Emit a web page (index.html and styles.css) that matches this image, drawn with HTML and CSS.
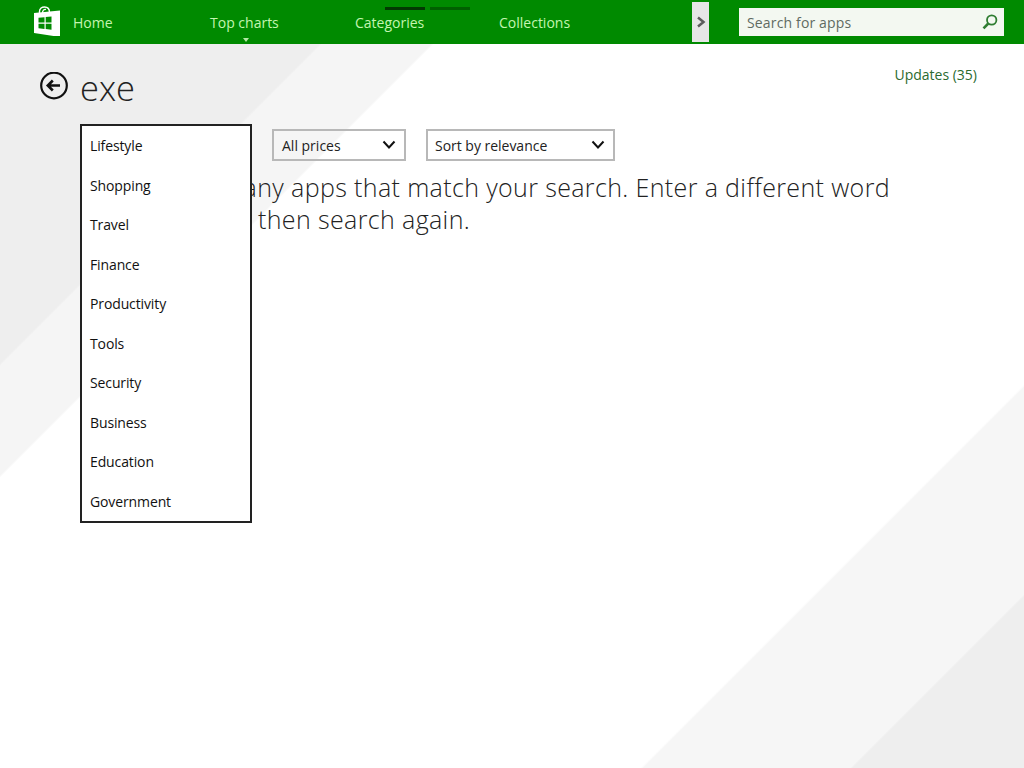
FILE: index.html
```html
<!DOCTYPE html>
<html lang="en">
<head>
<meta charset="utf-8">
<title>Store search</title>
<link rel="stylesheet" href="styles.css">
</head>
<body>
<header class="topbar">
  <svg class="logo" width="28" height="30" viewBox="0 0 28 30">
    <path class="logo-handle" d="M6.500 8 V5.500 C6.500 2.500 9 1 11.500 1 C14.500 1 16.500 3 16.500 6.500 M9.500 7 C9.500 4.500 11 3 13 3.500"/>
    <path class="logo-bag" d="M1 7 L27 4.500 V31 L1 27 Z"/>
    <path class="logo-win" d="M5.500 11.800 L11.500 11.200 V16.600 H5.500 Z M12.700 11.100 L18.500 10.500 V16.600 H12.700 Z M5.500 17.800 H11.500 V22.900 L5.500 22.300 Z M12.700 17.800 H18.500 V23.800 L12.700 23.100 Z"/>
  </svg>
  <nav class="nav">
    <a class="nav-item nav-home">Home</a>
    <a class="nav-item nav-charts">Top charts<span class="caret"></span></a>
    <a class="nav-item nav-cats">Categories</a>
    <a class="nav-item nav-coll">Collections</a>
  </nav>
  <div class="pager"><span class="pip pip-on"></span><span class="pip"></span></div>
  <button class="scroll-btn">
    <svg width="10" height="12" viewBox="0 0 10 12"><path d="M2 1.500 L7.500 6 L2 10.500" /></svg>
  </button>
  <div class="search">
    <span class="search-text">Search for apps</span>
    <svg class="search-icon" width="18" height="18" viewBox="0 0 18 18"><circle cx="10.700" cy="7" r="4.700"/><path class="search-handle" d="M7.300 10.500 L2.500 15.300"/></svg>
  </div>
</header>
<main class="page">
  <div class="title-row">
    <svg class="back" width="30" height="30" viewBox="0 0 30 30"><circle cx="15" cy="13.500" r="12.800"/><path class="back-arrow" d="M9 13.500 H21 M13.800 8.500 L8.800 13.500 L13.800 18.500"/></svg>
    <h1 class="title">exe</h1>
    <a class="updates">Updates (35)</a>
  </div>
  <div class="content">
    <ul class="dropdown">
      <li>Lifestyle</li>
      <li>Shopping</li>
      <li>Travel</li>
      <li>Finance</li>
      <li>Productivity</li>
      <li>Tools</li>
      <li>Security</li>
      <li>Business</li>
      <li>Education</li>
      <li>Government</li>
    </ul>
    <div class="results">
      <div class="filters">
        <div class="select select-price"><span>All prices</span><svg width="14" height="10" viewBox="0 0 14 10"><path d="M1.500 1.500 L7 7.500 L12.500 1.500"/></svg></div>
        <div class="select select-sort"><span>Sort by relevance</span><svg width="14" height="10" viewBox="0 0 14 10"><path d="M1.500 1.500 L7 7.500 L12.500 1.500"/></svg></div>
      </div>
      <p class="message"><span class="line line-one">any apps that match your search. Enter a different word</span><span class="line line-two">then search again.</span></p>
    </div>
  </div>
</main>
</body>
</html>
```
FILE: styles.css
```css
* { box-sizing: border-box; }
html, body { margin: 0; height: 100%; }
body {
  width: 1024px;
  height: 768px;
  overflow: hidden;
  font-family: "Open Sans", "Noto Sans", sans-serif;
  color: #1a1a1a;
  background: linear-gradient(135deg,
    #eeeeee 0, #eeeeee 257px,
    #f5f5f5 259px, #f5f5f5 336px,
    #ffffff 338px, #ffffff 996px,
    #f6f6f6 998px, #f6f6f6 1144px,
    #eeeeee 1146px);
}
.topbar {
  position: relative;
  display: flex;
  align-items: center;
  height: 44px;
  background: #008a00;
  padding-left: 33px;
}
.logo { flex: none; margin-top: -2px; }
.logo-handle { fill: none; stroke: #fff; stroke-width: 1.4; }
.logo-bag { fill: #fff; }
.logo-win { fill: #008a00; }
.nav { display: flex; font-size: 14px; margin-left: 12px; }
.nav-item { color: #c4f5b0; display: block; position: relative; white-space: nowrap; }
.nav-home { width: 137px; }
.nav-charts { width: 145px; }
.nav-cats { width: 144px; }
.nav-coll { width: 100px; }
.caret {
  position: absolute;
  left: 32px;
  top: 25px;
  margin-left: 1px;
  border: 3.500px solid transparent;
  border-top: 4px solid #b5e8a5;
  border-bottom: 0;
}
.pager {
  position: absolute;
  left: 385px;
  top: 7px;
  display: flex;
  gap: 5px;
}
.pip { width: 40px; height: 3px; background: #006000; }
.pip-on { background: #023a02; }
.scroll-btn {
  position: absolute;
  left: 692px;
  top: 2px;
  width: 17px;
  height: 40px;
  padding: 0;
  border: 0;
  background: #e6e6e6;
  display: flex;
  align-items: center;
  justify-content: center;
}
.scroll-btn svg { fill: none; stroke: #5c5c5c; stroke-width: 2.500; }
.search {
  position: absolute;
  left: 739px;
  top: 8px;
  width: 265px;
  height: 28px;
  background: #f3f8f1;
  display: flex;
  align-items: center;
  justify-content: space-between;
  padding: 0 5px 0 8px;
  font-size: 14px;
  letter-spacing: .15px;
  color: #5f6b62;
}
.search-icon { fill: none; stroke: #2f7d32; stroke-width: 1.800; }
.search-handle { stroke-width: 2.600; }
.page { position: relative; }
.title-row {
  display: flex;
  align-items: flex-start;
  padding: 28px 47px 0 39px;
  height: 80px;
}
.back { fill: none; stroke: #111; stroke-width: 2.200; flex: none; }
.back-arrow { stroke-width: 2.600; }
.title {
  margin: -6px 0 0 11px;
  font-size: 34.500px;
  line-height: 44px;
  font-weight: 300;
  color: #222;
}
.updates { margin-left: auto; margin-top: -7px; font-size: 14px; color: #2b6b2f; }
.content { display: flex; align-items: flex-start; padding-left: 80px; }
.dropdown {
  position: relative;
  z-index: 1;
  flex: none;
  list-style: none;
  margin: 0;
  padding: 1px 0 0 8px;
  width: 172px;
  height: 399px;
  background: #fff;
  border: 2px solid #222;
  font-size: 14px;
  letter-spacing: -.12px;
  color: #111;
}
.dropdown li { height: 39.500px; line-height: 37px; }
.results { flex: none; width: 0; }
.filters { display: flex; gap: 20px; margin: 5px 0 0 20px; width: 400px; }
.select {
  height: 32px;
  border: 2px solid #b8b8b8;
  display: flex;
  align-items: center;
  justify-content: space-between;
  padding: 0 8px;
  font-size: 14px;
  color: #222;
  flex: none;
}
.select svg { fill: none; stroke: #111; stroke-width: 2; }
.select-price { width: 134px; }
.select-sort { width: 189px; padding-left: 7px; letter-spacing: -.02px; }
.message {
  margin: 10px 0 0 0;
  width: 700px;
  font-size: 25px;
  line-height: 32px;
  font-weight: 300;
  letter-spacing: .37px;
  color: #222;
}
.line { display: block; white-space: nowrap; }
.line-one { margin-left: -8.400px; }
.line-two { margin-left: 6px; }
```
